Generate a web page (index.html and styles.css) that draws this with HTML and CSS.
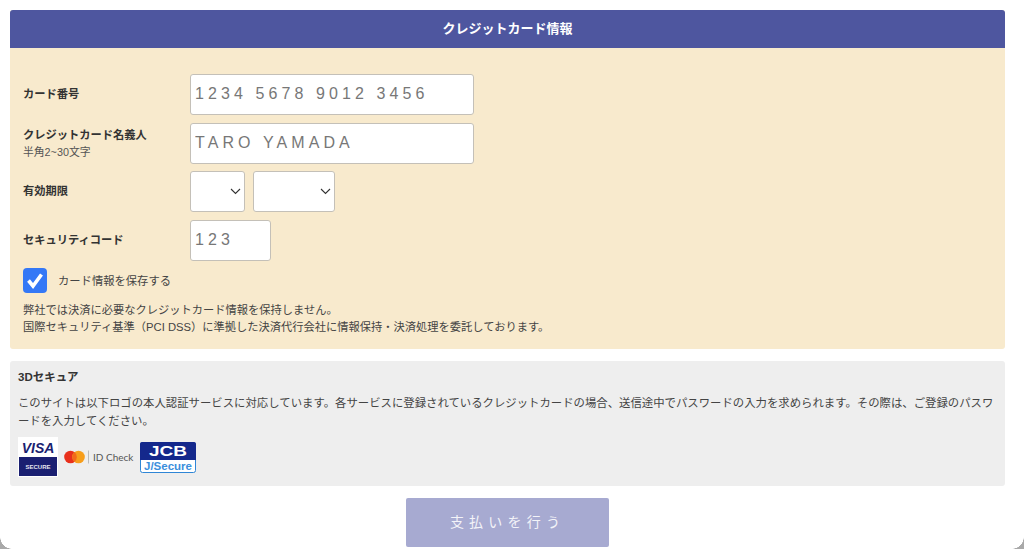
FILE: index.html
```html
<html>
    <head>
        <meta charset="UTF-8">
        <title>クレジットカード情報</title>
        <link rel="stylesheet" href="styles.css">
    </head>
    <body>
        <div class="card">
            <div class="card-head">クレジットカード情報</div>
            <div class="card-body">
                <div class="row">
                    <div class="label">カード番号</div>
                    <input class="field field-number" type="text" placeholder="1234 5678 9012 3456" />
                </div>
                <div class="row">
                    <div class="label">クレジットカード名義人<small>半角2~30文字</small></div>
                    <input class="field field-number" type="text" placeholder="TARO YAMADA" />
                </div>
                <div class="row">
                    <div class="label">有効期限</div>
                    <div class="select select-month">
                        <svg width="11" height="7" viewBox="0 0 11 7"><path d="M1 1l4.5 4.5L10 1" fill="none" stroke="#333" stroke-width="1.1"/></svg>
                    </div>
                    <div class="select select-year">
                        <svg width="11" height="7" viewBox="0 0 11 7"><path d="M1 1l4.5 4.5L10 1" fill="none" stroke="#333" stroke-width="1.1"/></svg>
                    </div>
                </div>
                <div class="row">
                    <div class="label">セキュリティコード</div>
                    <input class="field field-cvc" type="text" placeholder="123" />
                </div>
                <div class="save">
                    <span class="check">
                        <svg width="24" height="24" viewBox="0 0 24 24"><path d="M5.5 12.5 10 18 18.5 6.5" fill="none" stroke="#fff" stroke-width="3.6"/></svg>
                    </span>
                    カード情報を保存する
                </div>
                <p class="note">弊社では決済に必要なクレジットカード情報を保持しません。<br/>国際セキュリティ基準（PCI DSS）に準拠した決済代行会社に情報保持・決済処理を委託しております。</p>
            </div>
        </div>
        <div class="secure">
            <div class="secure-title">3Dセキュア</div>
            <p class="secure-text">このサイトは以下ロゴの本人認証サービスに対応しています。各サービスに登録されているクレジットカードの場合、送信途中でパスワードの入力を求められます。その際は、ご登録のパスワ<br/>ードを入力してください。</p>
            <div class="logos">
                <svg class="logo-visa" width="40" height="40" viewBox="0 0 40 40">
                    <rect width="40" height="40" fill="#fff"/>
                    <text x="20" y="15.5" text-anchor="middle" class="visa-word">VISA</text>
                    <rect x="1" y="20" width="38" height="19" fill="#1a1f71"/>
                    <text x="20" y="32" text-anchor="middle" class="visa-sub">SECURE</text>
                </svg>
                <svg class="logo-mc" width="70" height="14" viewBox="0 0 70 14">
                    <circle cx="6.5" cy="7" r="6.3" fill="#e8301c"/>
                    <circle cx="14.5" cy="7" r="6.3" fill="#f79e1b"/>
                    <path d="M10.5 2.1a6.3 6.3 0 0 1 0 9.8a6.3 6.3 0 0 1 0-9.8z" fill="#f26a1b"/>
                    <rect x="24" y="0.5" width="1" height="13" fill="#bbb"/>
                    <text x="29" y="11" class="mc-text">ID Check</text>
                </svg>
                <svg class="logo-jcb" width="56" height="31" viewBox="0 0 56 31">
                    <rect x="0.5" y="0.5" width="55" height="30" rx="2" fill="#fff" stroke="#2f86d6"/>
                    <path d="M0 2a2 2 0 0 1 2-2h52a2 2 0 0 1 2 2v16H0z" fill="#14288c"/>
                    <text x="28" y="14" text-anchor="middle" textLength="38" lengthAdjust="spacingAndGlyphs" class="jcb-word">JCB</text>
                    <text x="28" y="28" text-anchor="middle" textLength="48" lengthAdjust="spacingAndGlyphs" class="jcb-sub">J/Secure</text>
                </svg>
            </div>
        </div>
        <div class="actions">
            <div class="pay">支払いを行う</div>
        </div>
        <div class="corner corner-left"></div>
        <div class="corner corner-right"></div>
    </body>
</html>
```

FILE: styles.css
```css
* {
    box-sizing:border-box;
    font-family: "Liberation Sans", "Noto Sans CJK JP", sans-serif;
}
html, body {
    height:549px;
    overflow:hidden;
}
body {
    margin:0;
    padding:10px 19px 0 10px;
    background:#fff;
    color:#333;
    position:relative;
}
.card {
    border-radius:3px;
    overflow:hidden;
    background:#f8eacd;
}
.card-head {
    height:38px;
    line-height:38px;
    background:#4e569f;
    color:#fff;
    font-size:13px;
    font-weight:bold;
    text-align:center;
}
.card-body {
    padding:26px 13px 0;
    height:301px;
}
.row {
    display:flex;
    align-items:center;
    gap:8px;
    height:41px;
    margin-bottom:7.7px;
}
.label {
    width:159px;
    padding-bottom:2px;
    font-size:11.25px;
    font-weight:bold;
    line-height:16px;
}
.label small {
    display:block;
    margin-top:1px;
    margin-bottom:-3px;
    font-size:10.8px;
    font-weight:normal;
    color:#555;
}
.field {
    height:41px;
    padding:0 4px 1px;
    border:1px solid #c4c0b8;
    border-radius:3px;
    background:#fff;
    font-size:16px;
    letter-spacing:4.1px;
    outline:none;
}
.field::placeholder {
    color:#777;
    opacity:1;
}
.field-number { width:284px; }
.field-cvc { width:81px; }
.select {
    height:41px;
    padding-right:3px;
    border:1px solid #c4c0b8;
    border-radius:3px;
    background:#fff;
    display:flex;
    align-items:center;
    justify-content:flex-end;
}
.select-month { width:55px; }
.select-year { width:82px; }
.save {
    display:flex;
    align-items:center;
    gap:11px;
    margin-top:-1px;
    font-size:11.3px;
    color:#444;
}
.check {
    width:24px;
    height:25px;
    border-radius:4px;
    background:#3478f6;
    display:flex;
    align-items:center;
    justify-content:center;
}
.note {
    margin:9px 0 0;
    font-size:11.25px;
    line-height:17px;
    color:#444;
}
.secure {
    height:125px;
    margin-top:12px;
    padding:9px 8px 0;
    border-radius:3px;
    background:#eee;
}
.secure-title {
    font-size:11.5px;
    font-weight:bold;
    line-height:15px;
}
.secure-text {
    margin:10px 0 0;
    font-size:11.38px;
    line-height:17.5px;
    color:#444;
}
.logos {
    display:flex;
    align-items:center;
    gap:6px;
    margin-top:7px;
}
.visa-word {
    font-size:14px;
    font-weight:bold;
    font-style:italic;
    fill:#1a1f71;
}
.visa-sub {
    font-size:6px;
    font-weight:bold;
    fill:#e6e6f0;
}
.mc-text {
    font-family:Lato, sans-serif;
    font-size:10px;
    fill:#555;
}
.jcb-word {
    font-size:14px;
    font-weight:bold;
    fill:#fff;
}
.jcb-sub {
    font-size:11.5px;
    font-weight:bold;
    fill:#3b8fdc;
}
.actions {
    display:flex;
    justify-content:center;
    margin-top:12px;
}
.pay {
    width:203px;
    height:49px;
    line-height:49px;
    border-radius:2px;
    background:#a7aad1;
    color:#f3f3f8;
    font-size:14px;
    letter-spacing:5.2px;
    text-align:center;
}
.corner {
    position:absolute;
    bottom:0;
    width:12px;
    height:12px;
}
.corner-left {
    left:0;
    background:radial-gradient(circle at 100% 0, transparent 11.5px, #a9a9a9 12px);
}
.corner-right {
    right:0;
    background:radial-gradient(circle at 0 0, transparent 11.5px, #a9a9a9 12px);
}
```
